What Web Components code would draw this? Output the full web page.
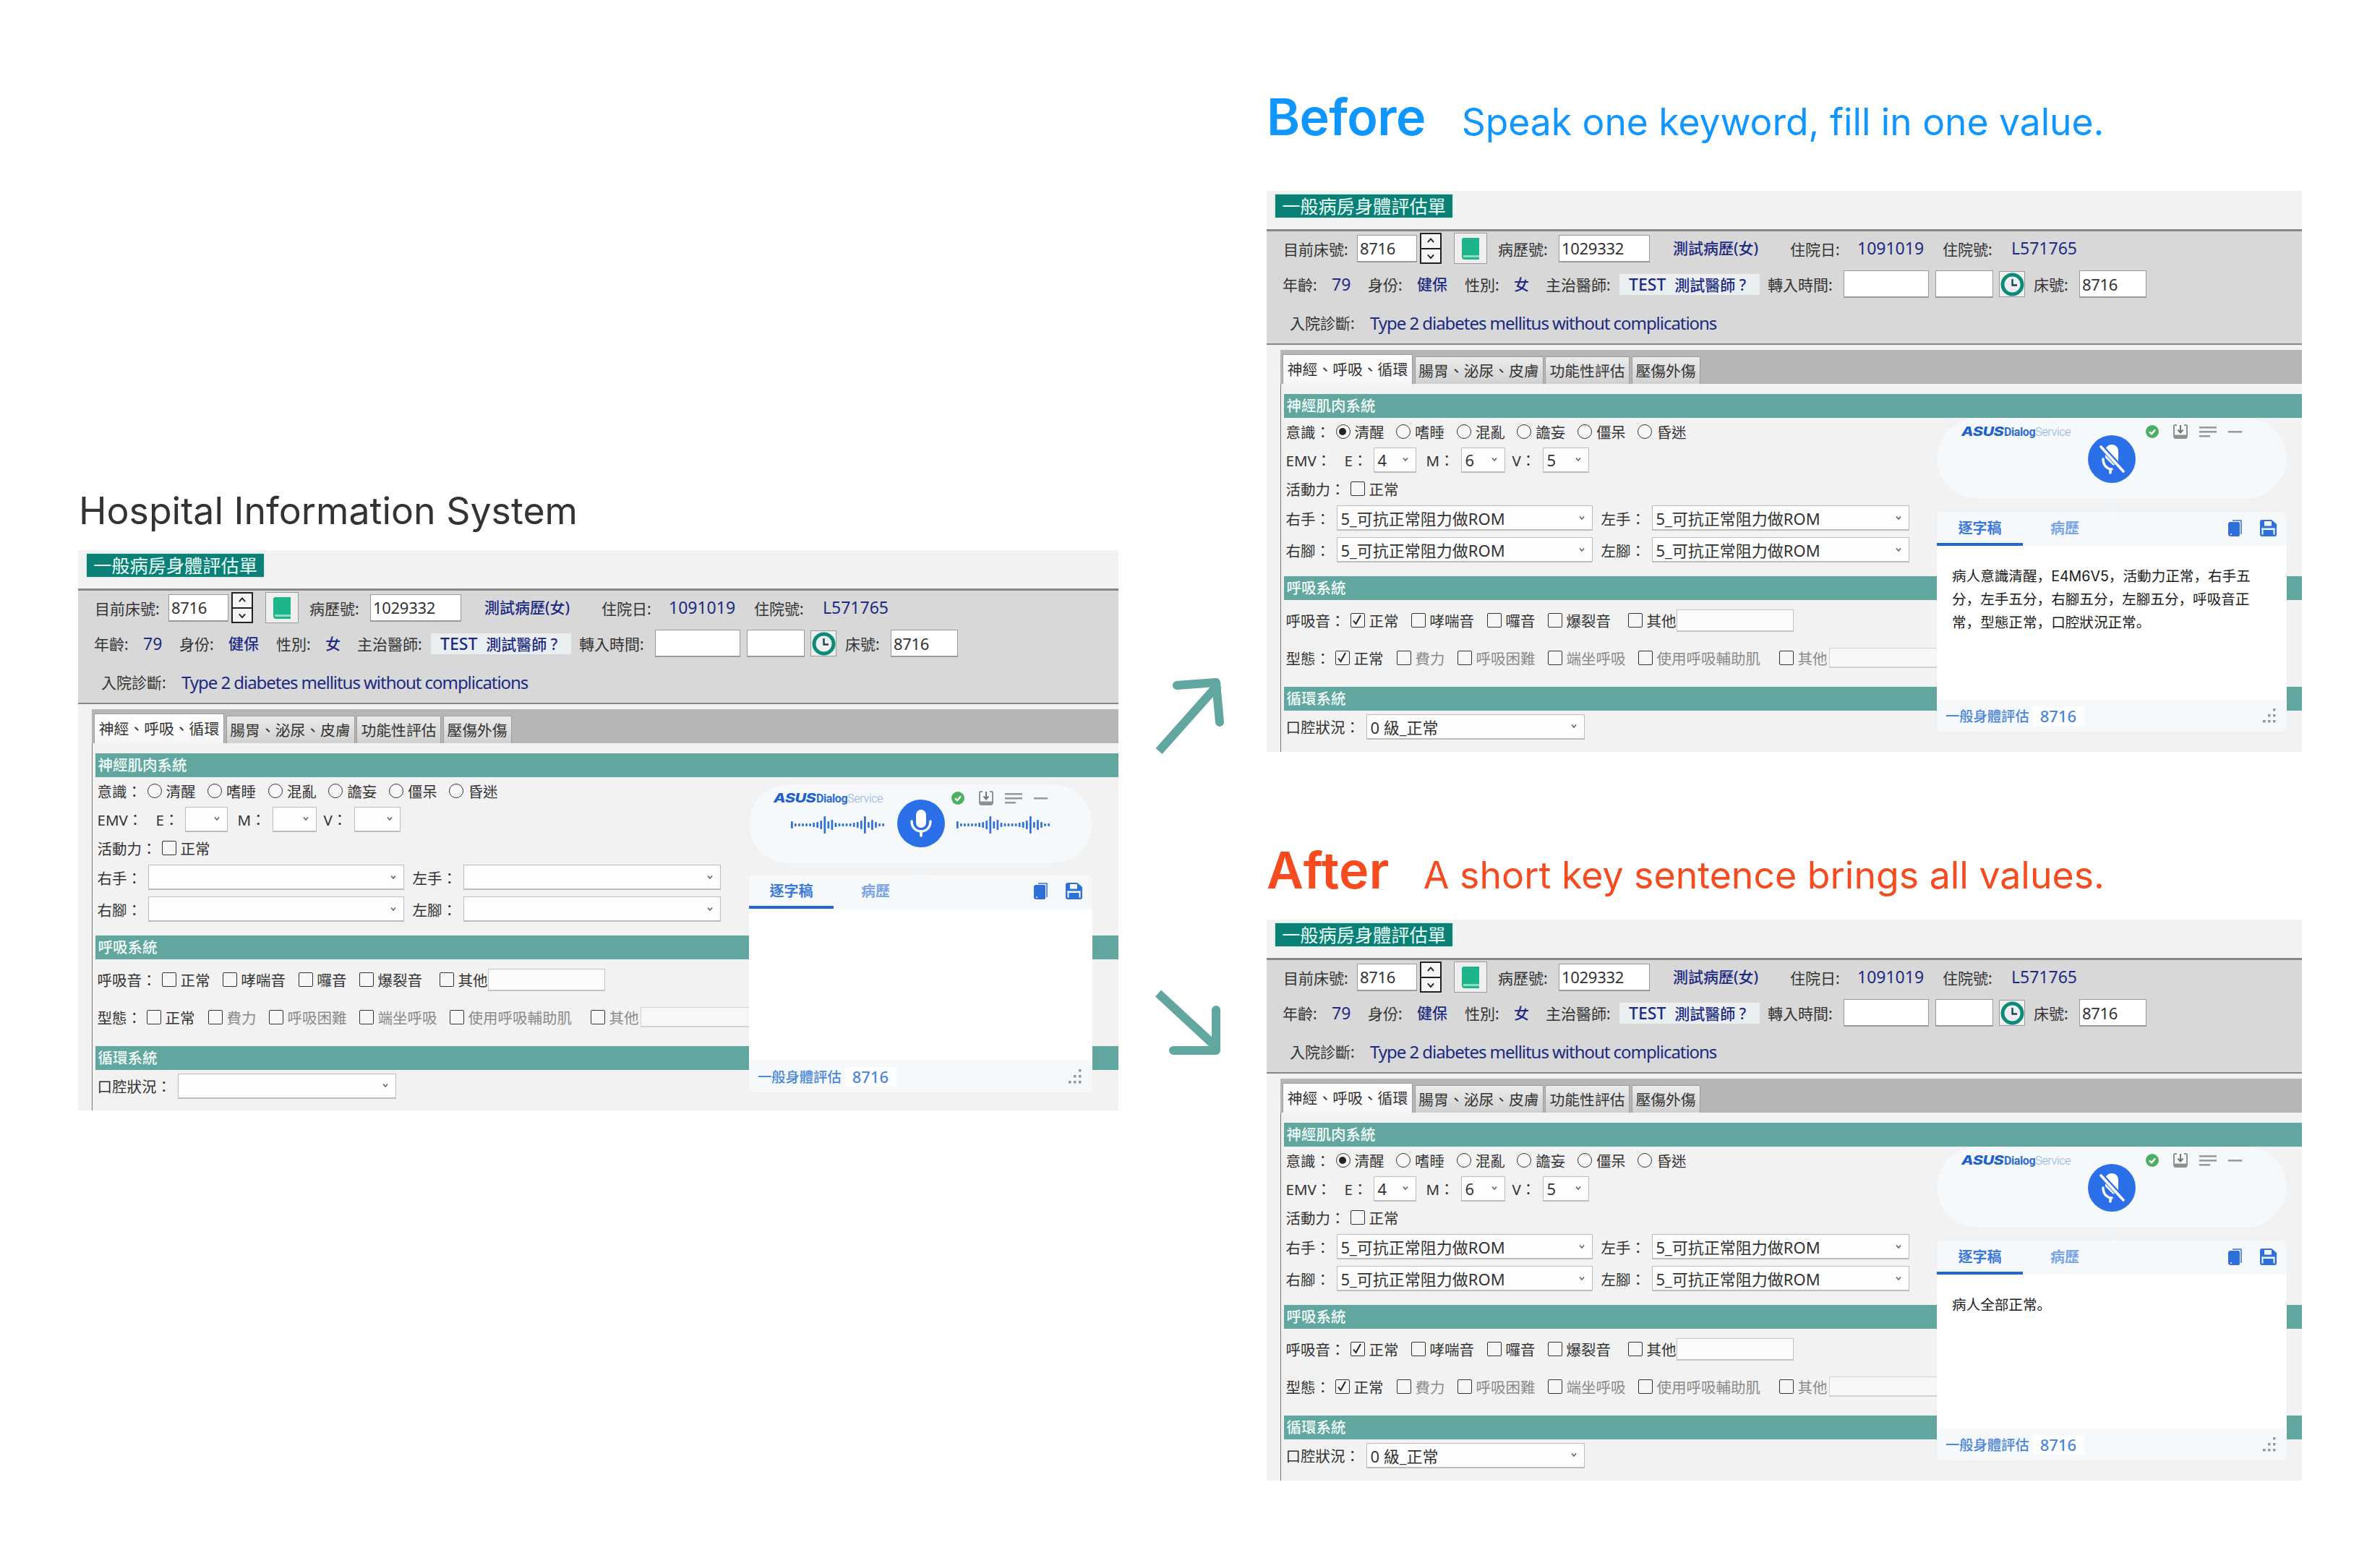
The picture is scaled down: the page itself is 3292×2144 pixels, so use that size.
<!DOCTYPE html>
<html lang="zh-Hant">
<head>
<meta charset="utf-8">
<title>Hospital Information System</title>
<style>
  html, body { margin: 0; background: #fff; }
</style>
</head>
<body>
<demo-page>
  <case-column slot="left">
    <case-title plain sub="Hospital Information System"></case-title>
    <his-form state="listening"></his-form>
  </case-column>
  <case-column slot="right">
    <case-title name="Before" sub="Speak one keyword, fill in one value." tone="#1096ff"></case-title>
    <his-form filled compact state="muted">病人意識清醒，E4M6V5，活動力正常，右手五分，左手五分，右腳五分，左腳五分，呼吸音正常，型態正常，口腔狀況正常。</his-form>
    <case-title after name="After" sub="A short key sentence brings all values." tone="#f64b1f"></case-title>
    <his-form filled compact state="muted">病人全部正常。</his-form>
  </case-column>
</demo-page>

<script>
(function (document) {
  'use strict';

  const FONT = '"Noto Sans", "Noto Sans CJK TC", sans-serif';

  // layout of the whole picture
  class DemoPage extends HTMLElement {
    constructor() {
      super();
      this.attachShadow({ mode: 'open' }).innerHTML = `
        <style>
          :host { display: grid; grid-template-columns: 1439px 205px 1432px; padding-left: 108px; width: 3184px; }
          .arrows { display: flex; flex-direction: column; align-items: flex-start; padding: 933px 0 0 50px; }
          .arrows svg { display: block; }
          .arrows svg + svg { margin-top: 320px; }
          .left { padding-top: 660px; }
        </style>
        <div class="left"><slot name="left"></slot></div>
        <div class="arrows">
          <svg width="100" height="116" viewBox="0 0 100 116" fill="none" stroke="#62a6a0" stroke-width="12">
            <path d="M6 106 L88 14"/>
            <path d="M31 15 L85 11 L90 66" stroke-linecap="round" stroke-linejoin="round"/>
          </svg>
          <svg width="100" height="96" viewBox="0 0 100 96" fill="none" stroke="#62a6a0" stroke-width="12">
            <path d="M5 5 L84 78"/>
            <path d="M85 28 L85 84 L26 84" stroke-linecap="round" stroke-linejoin="round"/>
          </svg>
        </div>
        <div><slot name="right"></slot></div>
      `;
    }
  }

  class CaseColumn extends HTMLElement {
    constructor() {
      super();
      this.attachShadow({ mode: 'open' }).innerHTML = `
        <style>:host { display: block; }</style><slot></slot>`;
    }
  }

  class CaseTitle extends HTMLElement {
    constructor() {
      super();
      const tone = this.getAttribute('tone') || '#333';
      const name = this.getAttribute('name');
      this.attachShadow({ mode: 'open' }).innerHTML = `
        <style>
          :host { display: flex; align-items: baseline; height: 264px; box-sizing: border-box; padding: 120px 0 0 0; color: ${tone}; font-family: Inter, sans-serif; white-space: nowrap; }
          :host([plain]) { height: 101px; padding: 4px 0 0 1px; }
          :host([after]) { height: 232px; padding: 122px 0 0 0; }
          b { font-size: 70px; font-weight: 600; line-height: 84px; margin-right: 50px; letter-spacing: -.6px; }
          :host([after]) b { margin-right: 47px; letter-spacing: .3px; }
          span { font-size: 51.5px; line-height: 84px; font-weight: 400; }
          :host([after]) span, :host([plain]) span { font-size: 51.8px; }
        </style>
        ${name ? `<b>${name}</b>` : ''}<span>${this.getAttribute('sub')}</span>`;
    }
  }

  class HisCheck extends HTMLElement {
    constructor() {
      super();
      const mark = this.hasAttribute('radio')
        ? '<circle cx="10" cy="10" r="5" fill="#222"/>'
        : '<path d="M5 10.5 L8.5 15 L15 3" fill="none" stroke="#222" stroke-width="2"/>';
      this.attachShadow({ mode: 'open' }).innerHTML = `
        <style>
          :host { display: inline-flex; align-items: center; gap: 6px; flex: none; font-size: 20.5px; color: #333; white-space: nowrap; }
          :host([muted]) { color: #8b8b8b; }
          .box { width: 20px; height: 20px; flex: none; box-sizing: border-box; border: 1.5px solid #333; border-radius: 2px; background: #f6f6f6; position: relative; }
          :host([radio]) .box { border-radius: 50%; }
          svg { position: absolute; left: -1.5px; top: -1.5px; }
        </style>
        <span class="box">${this.hasAttribute('checked') ? `<svg width="20" height="20">${mark}</svg>` : ''}</span>
        <slot></slot>`;
    }
  }

  class HisSelect extends HTMLElement {
    constructor() {
      super();
      this.attachShadow({ mode: 'open' }).innerHTML = `
        <style>
          :host { display: inline-flex; align-items: center; flex: none; box-sizing: border-box; height: 35px; padding: 0 10px 0 5px; background: #fdfdfd; border: 1.5px solid #bdbdbd; border-bottom-width: 2px; font-size: 22px; color: #333; white-space: nowrap; }
          svg { margin-left: auto; flex: none; }
        </style>
        <slot></slot>
        <svg width="8" height="7" viewBox="0 0 8 7" fill="none" stroke="#666" stroke-width="1.6"><path d="M1 1.5 L4 5 L7 1.5"/></svg>`;
    }
  }

  class HisSection extends HTMLElement {
    constructor() {
      super();
      this.attachShadow({ mode: 'open' }).innerHTML = `
        <style>
          :host { display: flex; align-items: center; align-self: end; box-sizing: border-box; height: 33px; padding: 0 0 3px 4px; background: #62a6a0; color: #f2fbf8; font-size: 20.5px; font-weight: 500; white-space: nowrap; }
        </style>
        <slot></slot>`;
    }
  }

  const waveBars = [10, 4, 4, 4, 4, 4, 6, 8, 12, 24, 10, 14, 6, 4, 4, 4, 4, 6, 8, 12, 24, 8, 14, 8, 4, 4];
  function wave() {
    const bars = waveBars.map((h, i) =>
      `<rect x="${i * 5.05}" y="${15 - h / 2}" width="2.7" height="${h}" rx="1"/>`).join('');
    return `<svg class="wave" width="131" height="30" viewBox="0 0 131 30" fill="#2f6fd6">${bars}</svg>`;
  }

  const MIC_ON = `<svg width="66" height="66" viewBox="0 0 66 66" fill="none">
      <rect x="26" y="14" width="14" height="25" rx="7" fill="#fff"/>
      <path d="M20 30 C20 39 26 44 33 44 C40 44 46 39 46 30" stroke="#fff" stroke-width="3.4" stroke-linecap="round"/>
      <path d="M33 44 V50" stroke="#fff" stroke-width="3.6" stroke-linecap="round"/>
    </svg>`;
  const MIC_OFF = `<svg width="66" height="66" viewBox="0 0 66 66" fill="none">
      <path d="M24 31 V22 C24 10 42 10 42 22 V36 C42 41 38 42 34 41 Z" fill="#fff"/>
      <path d="M21 33 C21 42 27 47 33 47" stroke="#fff" stroke-width="3.4" stroke-linecap="round"/>
      <path d="M31 47 V52" stroke="#fff" stroke-width="3.6" stroke-linecap="round"/>
      <path d="M17 14 L50 50" stroke="#2b70e8" stroke-width="7"/>
      <path d="M18 16 L49 50" stroke="#fff" stroke-width="3.6" stroke-linecap="round"/>
    </svg>`;

  class DialogWidget extends HTMLElement {
    constructor() {
      super();
      const on = this.getAttribute('state') === 'listening';
      this.attachShadow({ mode: 'open' }).innerHTML = `
        <style>
          :host { display: flex; flex-direction: column; position: absolute; right: var(--dw-right); top: var(--dw-top); width: var(--dw-w); font-family: ${FONT}; }
          .pill { position: relative; height: var(--dw-pill); border-radius: 56px; background: #f5f9fb; box-shadow: 0 0 3px rgba(0,0,0,.03); }
          .top { display: flex; align-items: center; height: 38px; padding: 0 62px 0 34px; }
          .logo { display: flex; align-items: baseline; font-family: Roboto, sans-serif; white-space: nowrap; }
          .asus { display: inline-block; width: 59px; font: italic 800 17px Inter, sans-serif; color: #1f5fd0; transform: scaleX(1.27); transform-origin: 0 50%; letter-spacing: -.4px; }
          .d1 { font-size: 16px; font-weight: 700; letter-spacing: -.4px; color: #2d6cd2; }
          .d2 { font-size: 16px; font-weight: 300; letter-spacing: -.3px; color: #8eb0e0; }
          .tools { display: flex; align-items: center; margin-left: auto; }
          .tools svg { display: block; flex: none; }
          .mic { position: absolute; left: 0; right: 0; top: var(--dw-mic); display: flex; justify-content: center; align-items: center; gap: 16px; }
          .disc { width: 66px; height: 66px; border-radius: 50%; background: #2b70e8; flex: none; }
          .disc svg { display: block; }
          .wave { margin-top: 4px; }
          .tip { height: var(--dw-gap); display: flex; justify-content: center; }
          .tip i { display: block; width: 22px; height: 100%; background: #eff3f5; clip-path: polygon(50% 0, 100% 100%, 0 100%); }
          .card { height: var(--dw-card); display: flex; flex-direction: column; border-radius: 7px; overflow: hidden; background: #fff; box-shadow: 0 0 3px rgba(0,0,0,.04); }
          .head { height: 47px; flex: none; display: flex; background: #f5f9fb; color: #7ba5e6; font-size: 20px; font-weight: 700; box-sizing: border-box; align-items: stretch; padding-right: 14px; }
          .head span { display: flex; align-items: center; justify-content: center; box-sizing: border-box; }
          .on { width: var(--dw-tab); color: #3d79d8; border-bottom: 4px solid #2166d6; }
          .off { margin-left: 38px; padding-bottom: 4px; }
          .acts { display: flex; align-items: center; gap: 25px; margin-left: auto; padding-bottom: 2px; }
          .acts svg { display: block; }
          .text { flex: 1; padding: 26px 21px; font: 19.6px/32px Inter, "Noto Sans CJK SC", sans-serif; color: #1a1a1a; }
          .text div { width: 418px; }
          .foot { height: 44px; flex: none; display: flex; align-items: center; padding: 0 14px 0 12px; background: #f5f9fb; color: #4d86da; font-size: 19.3px; font-weight: 500; white-space: nowrap; }
          .num { width: 71px; height: 27px; margin-left: 5px; background: #fff; display: flex; align-items: center; padding-left: 10px; box-sizing: border-box; font-size: 22px; font-weight: 500; }
          .grip { margin-left: auto; display: block; }
        </style>
        <div class="pill">
          <div class="top">
            <span class="logo"><span class="asus">ASUS</span><span class="d1">Dialog</span><span class="d2">Service</span></span>
            <span class="tools">
              <svg width="18" height="18" viewBox="0 0 18 18"><circle cx="9" cy="9" r="9" fill="#4caf62"/><path d="M5 9.4 L8 12.2 L13 6.4" fill="none" stroke="#fff" stroke-width="2.4"/></svg>
              <svg style="margin-left:19px" width="22" height="22" viewBox="0 0 22 22" fill="none" stroke="#8f8f8f" stroke-width="2"><path d="M6 2 H3.5 Q2 2 2 3.5 V17 Q2 20 5 20 H17 Q20 20 20 17 V3.5 Q20 2 18.5 2 H16" /><path d="M3 17.5 H19" stroke-width="4"/><path d="M11 2 V11 M7.5 8.5 L11 12.5 L14.5 8.5" stroke="#777" stroke-width="2"/></svg>
              <svg style="margin-left:15px" width="24" height="16" viewBox="0 0 24 16" fill="#9a9a9a"><rect width="24" height="2.6" y="1"/><rect width="24" height="2.6" y="7"/><rect width="15" height="2.6" y="13"/></svg>
              <svg style="margin-left:16px" width="19" height="4" viewBox="0 0 19 4" fill="#9a9a9a"><rect width="19" height="2.6" y="1"/></svg>
            </span>
          </div>
          <div class="mic">${on ? wave() : ''}<div class="disc">${on ? MIC_ON : MIC_OFF}</div>${on ? wave() : ''}</div>
        </div>
        <div class="tip"><i></i></div>
        <div class="card">
          <div class="head">
            <span class="on">逐字稿</span><span class="off">病歷</span>
            <div class="acts">
              <svg width="19" height="23" viewBox="0 0 19 23" fill="#2f6fd8"><path d="M6 0 H18 Q19 0 19 1 V20 H17 V2 H6 Z" opacity=".75"/><path d="M3 3 H14 Q16 3 16 5 V21 Q16 23 14 23 H4 Q0 23 0 20 V6 Q0 3 3 3 Z"/><circle cx="4" cy="20" r="1" fill="#fff"/></svg>
              <svg width="23" height="23" viewBox="0 0 23 23" fill="#2f6fd8"><path d="M3 0 H16 L23 6 V20 Q23 23 20 23 H3 Q0 23 0 20 V3 Q0 0 3 0 Z"/><rect x="6" y="2" width="10" height="6.5" fill="#f5f9fb"/><rect x="2.5" y="11.5" width="18" height="2.5" fill="#f5f9fb"/><rect x="2.5" y="11.5" width="2" height="9" fill="#f5f9fb"/><rect x="18.5" y="11.5" width="2" height="9" fill="#f5f9fb"/></svg>
            </div>
          </div>
          <div class="text"><div lang="zh-CN"><slot></slot></div></div>
          <div class="foot">一般身體評估<span class="num">8716</span>
            <svg class="grip" width="20" height="20" viewBox="0 0 20 20" fill="#8c9aa8"><rect x="15" y="0" width="3.5" height="3.5"/><rect x="8" y="8" width="3.5" height="3.5"/><rect x="15" y="8" width="3.5" height="3.5"/><rect x="1" y="16" width="3.5" height="3.5"/><rect x="8" y="16" width="3.5" height="3.5"/><rect x="15" y="16" width="3.5" height="3.5"/></svg>
          </div>
        </div>
        `;
    }
  }

  const lbl = (w, t) => `<span class="l" style="width:${w}px">${t}</span>`;
  const val = (w, t) => `<span class="v" style="width:${w}px">${t}</span>`;
  const box = (w, t, extra) => `<span class="box" style="width:${w}px${extra || ''}">${t || ''}</span>`;
  const chk = (w, t, attrs) => `<his-check ${attrs || ''} style="width:${w}px">${t}</his-check>`;
  const sel = (w, t) => `<his-select style="width:${w}px">${t || ''}</his-select>`;

  class HisForm extends HTMLElement {
    constructor() {
      super();
      const f = this.hasAttribute('filled');
      const rom = f ? '5_可抗正常阻力做ROM' : '';
      const on = f ? 'checked' : '';
      this.attachShadow({ mode: 'open' }).innerHTML = `
        <style>
          :host {
            display: block; position: relative; box-sizing: border-box; height: 775px; overflow: hidden;
            background: #f1f2f2; font-family: ${FONT}; font-size: 21px; color: #333;
            --dw-right: 36px; --dw-top: 324px; --dw-w: 475px; --dw-pill: 109px; --dw-gap: 16px; --dw-card: 301px; --dw-mic: 21px; --dw-tab: 117px;
          }
          :host([compact]) {
            height: 776px;
            --dw-right: 21px; --dw-top: 314px; --dw-w: 484px; --dw-pill: 112px; --dw-gap: 18px; --dw-card: 304px; --dw-mic: 24px; --dw-tab: 119px;
          }
          .caption { height: 53px; box-sizing: border-box; padding: 5px 0 0 12px; }
          .caption b { display: inline-flex; align-items: center; justify-content: center; width: 245px; height: 32px; padding-bottom: 2px; box-sizing: border-box; background: #0a8077; color: #e9fff8; font-size: 25.2px; font-weight: 400; white-space: nowrap; box-shadow: 0 0 2px #9fe0d4; }
          .band { height: 160px; box-sizing: border-box; padding-top: 2px; background: #d8d8d8; border-top: 3px solid #878787; border-bottom: 2px solid #878787; }
          .hrow { display: flex; align-items: center; white-space: nowrap; }
          .r1 { height: 43px; padding-left: 23px; }
          .r2 { height: 38px; margin-top: 9px; padding-left: 22px; }
          .r3 { height: 28px; margin-top: 20px; padding-left: 32px; }
          .l { display: block; flex: none; }
          .v { display: block; flex: none; color: #1d2a82; font-size: 23px; line-height: 1; }
          .v.c { font-size: 21px; font-weight: 500; }
          .box { display: flex; align-items: center; flex: none; box-sizing: border-box; height: 38px; padding-left: 3px; background: #fff; border: 1.5px solid #9a9a9a; border-bottom-width: 2px; font-size: 22px; letter-spacing: -.3px; color: #333; }
          .spin { display: flex; flex-direction: column; flex: none; width: 30px; height: 43px; margin: 0 17px 0 4px; box-sizing: border-box; border: 2px solid #222; background: #f5f5f5; }
          .spin svg { display: block; flex: 1; }
          .spin svg + svg { border-top: 2px solid #222; }
          .ico { display: flex; align-items: center; justify-content: center; flex: none; box-sizing: border-box; background: #efefef; border: 1.5px solid #9a9a9a; }
          .badge { display: flex; align-items: center; flex: none; width: 194px; height: 29px; padding-left: 13px; box-sizing: border-box; background: #e9eef0; color: #1d2a82; font-size: 21px; font-weight: 500; margin-right: 11px; }
          .badge em { font-style: normal; font-size: 23px; margin-right: 12px; }
          .dx { color: #1d2a82; font-size: 24px; letter-spacing: -1.04px; }
          .body { height: 400px; padding: 7px 0 0 19px; }
          .bar { height: 47px; box-sizing: border-box; background: #b6b6b6; display: flex; align-items: flex-end; padding-left: 3px; gap: 2.5px; }
          .tab { display: flex; align-items: center; justify-content: center; box-sizing: border-box; height: 38px; padding-bottom: 2px; border: 1px solid #9c9c9c; border-bottom: 0; border-radius: 2px 2px 0 0; background: linear-gradient(#ececec, #d0d0d0); font-size: 20.8px; white-space: nowrap; }
          .tab.on { height: 41px; background: linear-gradient(#fff, #f6f6f6); }
          .sheet { height: 520px; box-sizing: border-box; border-left: 1.5px solid #777; background: #f2f2f2; padding: 15px 0 0 3.5px; display: grid; grid-template-rows: 32px 40px 36px 44px 37px 51px 44px 56px 48px 49px 44px; }
          .row { display: flex; align-items: center; padding-left: 3px; font-size: 20px; white-space: nowrap; }
          .row .l { font-size: 20.5px; }
          .row his-select + .l { margin-left: 12px; }
          .row .box { font-size: 20px; }
        </style>
        <div class="caption"><b>一般病房身體評估單</b></div>
        <div class="band">
          <div class="hrow r1">
            ${lbl(102, '目前床號:')}${box(83, '8716')}
            <div class="spin">
              <svg viewBox="0 0 26 20" preserveAspectRatio="xMidYMid meet" fill="none" stroke="#222" stroke-width="2"><path d="M8.5 12 L13 7 L17.5 12"/></svg>
              <svg viewBox="0 0 26 20" preserveAspectRatio="xMidYMid meet" fill="none" stroke="#222" stroke-width="2"><path d="M8.5 8 L13 13 L17.5 8"/></svg>
            </div>
            <div class="ico" style="width:46px;height:43px;margin-right:15px">
              <svg width="24" height="30" viewBox="0 0 24 30"><path d="M3 0 H24 V30 H4 Q0 30 0 26 V3 Q0 0 3 0 Z" fill="#1db48c"/><rect x="2" y="24" width="22" height="3" fill="#8fdcc4"/></svg>
            </div>
            ${lbl(84, '病歷號:')}${box(126, '1029332', ';margin-right:32px')}
            <span class="v c" style="width:162px;white-space:nowrap">測試病歷(女)</span>${lbl(93, '住院日:')}${val(118, '1091019')}${lbl(95, '住院號:')}${val(110, 'L571765')}
          </div>
          <div class="hrow r2">
            ${lbl(68, '年齡:')}${val(50, '79')}${lbl(68, '身份:')}<span class="v c" style="width:66px">健保</span>${lbl(68, '性別:')}<span class="v c" style="width:44px">女</span>${lbl(102, '主治醫師:')}
            <div class="badge"><em>TEST</em>測試醫師 ?</div>
            ${lbl(105, '轉入時間:')}${box(118, '', ';margin-right:9px')}${box(80, '', ';margin-right:8px')}
            <div class="ico" style="width:36px;height:36px;margin-right:12px">
              <svg width="33" height="33" viewBox="0 0 33 33" fill="none"><circle cx="16.5" cy="16.5" r="13.5" stroke="#0d8a7a" stroke-width="5"/><path d="M16.5 9 V17.5 H23" stroke="#15465a" stroke-width="2.4"/></svg>
            </div>
            ${lbl(63, '床號:')}${box(93, '8716')}
          </div>
          <div class="hrow r3">
            ${lbl(111, '入院診斷:')}<span class="dx">Type 2 diabetes mellitus without complications</span>
          </div>
        </div>
        <div class="body">
          <div class="bar">
            <div class="tab on" style="width:180px">神經、呼吸、循環</div>
            <div class="tab" style="width:178px">腸胃、泌尿、皮膚</div>
            <div class="tab" style="width:117px">功能性評估</div>
            <div class="tab" style="width:95px">壓傷外傷</div>
          </div>
          <div class="sheet">
            <his-section>神經肌肉系統</his-section>
            <div class="row" style="padding-bottom:2px">${lbl(69, '意識：')}
              ${chk(83.6, '清醒', 'radio ' + on)}${chk(83.6, '嗜睡', 'radio')}${chk(83.6, '混亂', 'radio')}${chk(83.6, '譫妄', 'radio')}${chk(83.6, '僵呆', 'radio')}${chk(83.6, '昏迷', 'radio')}
            </div>
            <div class="row">${lbl(81, 'EMV：')}${lbl(40, 'E：')}${sel(59, f ? '4' : '')}<span style="width:14px"></span>${lbl(48, 'M：')}${sel(61, f ? '6' : '')}<span style="width:10px"></span>${lbl(42, 'V：')}${sel(64, f ? '5' : '')}</div>
            <div class="row">${lbl(89, '活動力：')}${chk(80, '正常')}</div>
            <div class="row">${lbl(70, '右手：')}${sel(354, rom)}${lbl(70, '左手：')}${sel(356, rom)}</div>
            <div class="row">${lbl(70, '右腳：')}${sel(354, rom)}${lbl(70, '左腳：')}${sel(356, rom)}</div>
            <his-section>呼吸系統</his-section>
            <div class="row">${lbl(89, '呼吸音：')}
              ${chk(84, '正常', on)}${chk(105, '哮喘音')}${chk(84, '囉音')}${chk(111, '爆裂音')}${chk(67, '其他')}
              <span class="box" style="width:162px;height:31px;background:#fbfbfb;border-color:#c2c2c2"></span>
            </div>
            <div class="row">${lbl(68, '型態：')}
              ${chk(85, '正常', on)}${chk(84, '費力', 'muted')}${chk(125, '呼吸困難', 'muted')}${chk(125, '端坐呼吸', 'muted')}${chk(195, '使用呼吸輔助肌', 'muted')}${chk(69, '其他', 'muted')}
              <span class="box" style="width:300px;height:28px;background:#f7f7f7;border-color:#d2d2d2"></span>
            </div>
            <his-section>循環系統</his-section>
            <div class="row">${lbl(111, '口腔狀況：')}${sel(302, f ? '0 級_正常' : '')}</div>
          </div>
        </div>
        <dialog-widget state="${this.getAttribute('state')}"><slot></slot></dialog-widget>
      `;
    }
  }

  customElements.define('his-check', HisCheck);
  customElements.define('his-select', HisSelect);
  customElements.define('his-section', HisSection);
  customElements.define('dialog-widget', DialogWidget);
  customElements.define('his-form', HisForm);
  customElements.define('case-title', CaseTitle);
  customElements.define('case-column', CaseColumn);
  customElements.define('demo-page', DemoPage);
})(document);
</script>
</body>
</html>
